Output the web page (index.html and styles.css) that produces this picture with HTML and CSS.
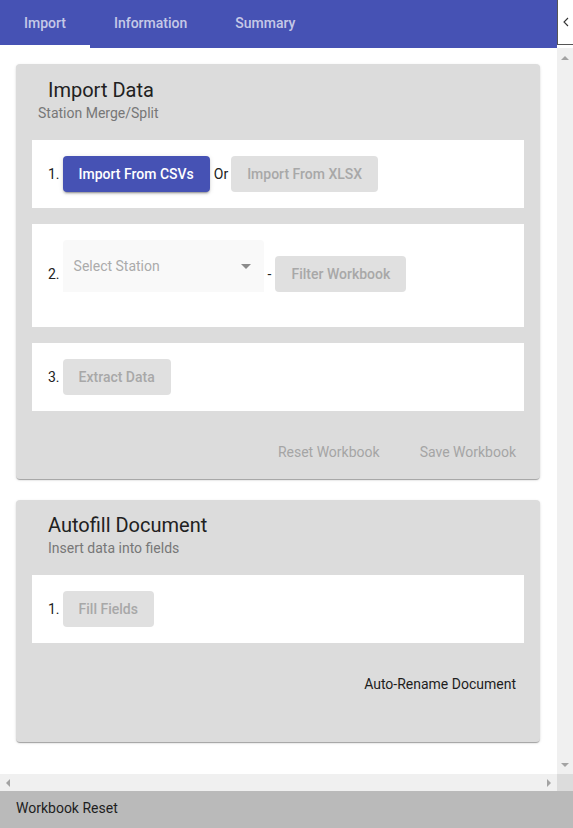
FILE: index.html
```html
<!DOCTYPE html>
<html lang="en">
<head>
<meta charset="utf-8">
<title>Station Merge</title>
<link rel="stylesheet" href="styles.css">
</head>
<body>
<div class="app">
  <header class="topbar">
    <nav class="tabs">
      <div class="tab active">Import</div>
      <div class="tab">Information</div>
      <div class="tab">Summary</div>
    </nav>
    <div class="side">
      <div class="collapse">
        <svg width="6" height="10" viewBox="0 0 6 10"><polyline points="5,1 1,5 5,9" fill="none" stroke="#333" stroke-width="1.1"/></svg>
      </div>
    </div>
  </header>

  <div class="viewport">
    <main class="content">
      <section class="card">
        <h2 class="card-title">Import Data</h2>
        <div class="card-sub sub-tight">Station Merge/Split</div>
        <div class="panels">
          <div class="panel">
            <span class="step">1.</span>
            <button class="btn btn-primary">Import From CSVs</button>
            <span class="or">Or</span>
            <button class="btn btn-disabled">Import From XLSX</button>
          </div>
          <div class="panel panel-select">
            <span class="step step-tall">2.</span>
            <div class="select">
              <span class="placeholder">Select Station</span>
              <span class="caret"></span>
            </div>
            <span class="dash">-</span>
            <button class="btn btn-disabled">Filter Workbook</button>
          </div>
          <div class="panel">
            <span class="step">3.</span>
            <button class="btn btn-disabled">Extract Data</button>
          </div>
        </div>
        <div class="actions">
          <button class="btn btn-text">Reset Workbook</button>
          <button class="btn btn-text">Save Workbook</button>
        </div>
      </section>

      <section class="card card-second">
        <h2 class="card-title">Autofill Document</h2>
        <div class="card-sub">Insert data into fields</div>
        <div class="panels">
          <div class="panel">
            <span class="step">1.</span>
            <button class="btn btn-disabled">Fill Fields</button>
          </div>
        </div>
        <div class="actions actions-tall">
          <button class="btn btn-text btn-dark">Auto-Rename Document</button>
        </div>
      </section>
    </main>
    <div class="vscroll">
      <span class="arrow arrow-up"></span>
      <span class="arrow arrow-down"></span>
    </div>
  </div>

  <div class="hrow">
    <div class="hscroll">
      <span class="arrow arrow-left"></span>
      <span class="arrow arrow-right"></span>
    </div>
    <div class="corner"></div>
  </div>

  <footer class="status">Workbook Reset</footer>
</div>
</body>
</html>
```

FILE: styles.css
```css
* { box-sizing: border-box; }

html, body {
  margin: 0;
  padding: 0;
  width: 573px;
  height: 828px;
  overflow: hidden;
  font-family: Roboto, "Liberation Sans", Arial, sans-serif;
  font-size: 14px;
  color: #212121;
  background: #fff;
}

.app {
  display: flex;
  flex-direction: column;
  height: 828px;
}

/* top bar */
.topbar {
  display: flex;
  height: 48px;
  flex: none;
}

.tabs {
  flex: 1;
  display: flex;
  background: #4652b4;
}

.tab {
  padding: 0 24px;
  display: flex;
  align-items: center;
  font-weight: 500;
  font-size: 14px;
  color: rgba(255, 255, 255, 0.7);
  border-bottom: 3px solid transparent;
}

.tab.active {
  border-bottom-color: #fff;
}

.side {
  width: 16px;
  background: #fff;
}

.collapse {
  height: 45px;
  border-left: 1px solid #555;
  border-bottom: 1px solid #555;
  background: #fff;
  display: flex;
  align-items: center;
  justify-content: center;
  padding-left: 1px;
}

/* scroll viewport */
.viewport {
  flex: 1;
  min-height: 0;
  display: flex;
}

.content {
  flex: 1;
  min-width: 0;
  overflow: hidden;
  padding: 16px 17px 0 16px;
  background: #fff;
}

.vscroll {
  width: 16px;
  background: #f0f0f0;
  display: flex;
  flex-direction: column;
  justify-content: space-between;
  align-items: center;
  padding: 8px 0 7px;
}

.hrow {
  height: 17px;
  flex: none;
  display: flex;
}

.hscroll {
  flex: 1;
  background: #f0f0f0;
  display: flex;
  justify-content: space-between;
  align-items: center;
  padding: 0 6px;
}

.corner {
  width: 16px;
  background: #dcdcdc;
}

.arrow {
  width: 0;
  height: 0;
  display: block;
}

.arrow-up {
  border-left: 4px solid transparent;
  border-right: 4px solid transparent;
  border-bottom: 4px solid #a3a3a3;
}

.arrow-down {
  border-left: 4px solid transparent;
  border-right: 4px solid transparent;
  border-top: 4px solid #a3a3a3;
}

.arrow-left {
  border-top: 4px solid transparent;
  border-bottom: 4px solid transparent;
  border-right: 4px solid #a3a3a3;
}

.arrow-right {
  border-top: 4px solid transparent;
  border-bottom: 4px solid transparent;
  border-left: 4px solid #a3a3a3;
}

/* status bar */
.status {
  height: 37px;
  flex: none;
  background: #bababa;
  padding: 0 16px 4px;
  display: flex;
  align-items: center;
  font-size: 14px;
  color: #1e1e1e;
}

/* cards */
.card {
  background: #dcdcdc;
  border-radius: 4px;
  box-shadow: 0 2px 1px -1px rgba(0, 0, 0, 0.2), 0 1px 1px 0 rgba(0, 0, 0, 0.14), 0 1px 3px 0 rgba(0, 0, 0, 0.12);
  padding-bottom: 0;
}

.card-second {
  margin-top: 21px;
}

.card-title {
  margin: 0;
  padding: 10px 32px 0;
  font-size: 20px;
  line-height: 32px;
  font-weight: 400;
  color: #212121;
}

.card-second .card-title {
  padding-top: 9px;
}

.card-sub {
  margin-top: -3px;
  padding-left: 32px;
  font-size: 14px;
  line-height: 20px;
  color: #777;
}

.sub-tight {
  padding-left: 22px;
}

.panels {
  padding: 17px 16px 0;
  display: flex;
  flex-direction: column;
  gap: 16px;
}

.panel {
  background: #fff;
  padding: 16px;
  display: flex;
  align-items: center;
}

.panel-select {
  align-items: flex-end;
  padding-bottom: 35px;
}

.step {
  margin-right: 3px;
  font-size: 14px;
  color: #222;
}

.step-tall {
  line-height: 36px;
}

.or {
  margin: 0 3px 0 4px;
  color: #222;
}

.dash {
  margin: 0 4px 0 4px;
  line-height: 36px;
  color: #222;
}

.btn {
  height: 36px;
  padding: 0 16px;
  border: none;
  border-radius: 4px;
  font-family: Roboto, "Liberation Sans", Arial, sans-serif;
  font-size: 14px;
  font-weight: 500;
  white-space: nowrap;
  cursor: pointer;
}

.btn-primary {
  background: #4652b4;
  color: #fff;
  box-shadow: 0 3px 1px -2px rgba(0, 0, 0, 0.2), 0 2px 2px 0 rgba(0, 0, 0, 0.14), 0 1px 5px 0 rgba(0, 0, 0, 0.12);
}

.btn-disabled {
  background: #e0e0e0;
  color: #a8a8a8;
}

.btn-text {
  background: transparent;
  color: #a5a5a5;
  font-weight: 400;
}

.btn-dark {
  color: #1e1e1e;
}

/* select */
.select {
  width: 201px;
  height: 52px;
  background: #f9f9f9;
  border-radius: 4px 4px 0 0;
  display: flex;
  align-items: center;
  justify-content: space-between;
  padding: 0 13px 0 11px;
}

.placeholder {
  font-size: 14px;
  color: #ababab;
}

.caret {
  width: 0;
  height: 0;
  border-left: 5px solid transparent;
  border-right: 5px solid transparent;
  border-top: 5px solid #8c8c8c;
}

.actions {
  display: flex;
  justify-content: flex-end;
  gap: 8px;
  padding: 23px 8px 9px;
}

.actions-tall {
  padding-bottom: 40px;
}
```
